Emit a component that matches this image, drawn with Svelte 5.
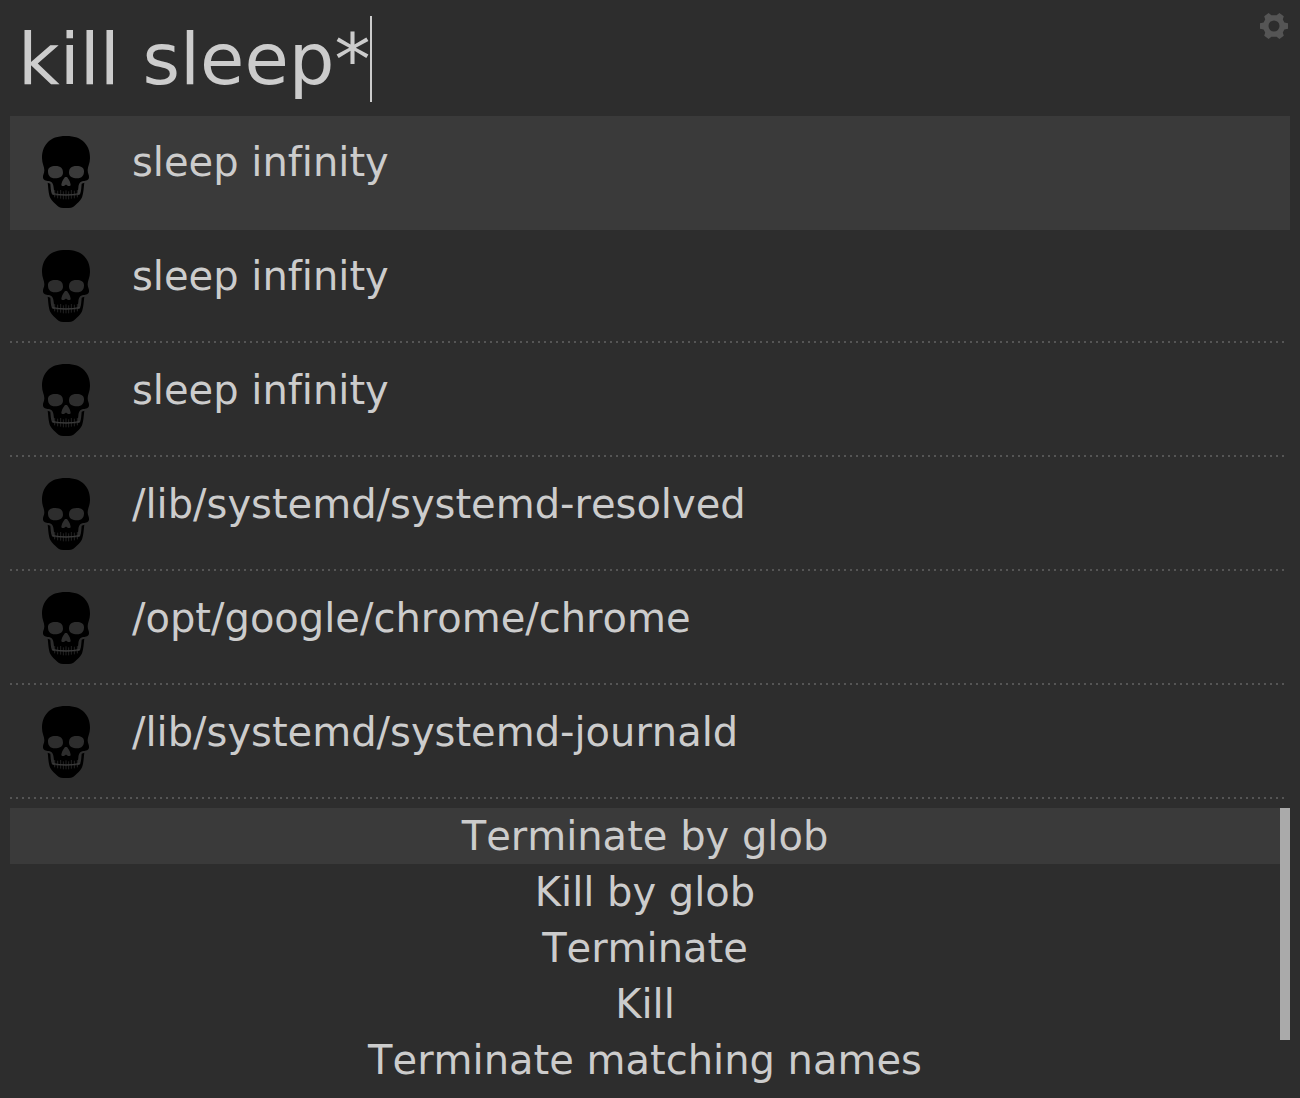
<script>
  let query = $state('kill sleep*');
  let selected = $state(0);
  let action = $state(0);
  const results = [
    'sleep infinity',
    'sleep infinity',
    'sleep infinity',
    '/lib/systemd/systemd-resolved',
    '/opt/google/chrome/chrome',
    '/lib/systemd/systemd-journald'
  ];
  const actions = ['Terminate by glob', 'Kill by glob', 'Terminate', 'Kill', 'Terminate matching names'];
</script>

{#snippet skull()}
  <svg class="skull" viewBox="0 0 144 216" aria-hidden="true">
    <path fill-rule="evenodd" d="M72 0C98 0 115 6 128 20C140 33 144 49 144 66C144 82 137 92 137 103C137 113 142 117 141 125C140 132 132 134 124 135C114 136 110 144 109 155L106 177C84 181 60 181 38 177L35 155C34 144 30 136 20 135C12 134 4 132 3 125C2 117 7 113 7 103C7 92 0 82 0 66C0 49 4 33 16 20C29 6 46 0 72 0ZM40 90C27 90 18 94 18 106C18 119 24 127 39 127C52 127 63 121 63 110C63 97 57 90 40 90ZM104 90C87 90 81 97 81 110C81 121 92 127 105 127C120 127 126 119 126 106C126 94 117 90 104 90ZM69 123C62 131 58 142 58 147C59 152 67 151 71 146H73C77 151 85 152 86 147C86 142 82 131 75 123Z" />
    <path d="M17 140L25 143C26 153 26 165 30 175C39 181 105 181 114 175C118 165 118 153 119 143L127 140C125 153 125 174 119 186C114 195 105 203 98 209C92 215 84 216 72 216C60 216 52 215 46 209C39 203 30 195 25 186C19 174 19 153 17 140Z" />
    <path class="teeth" d="M38 162V184M47 164V187M56 162V188M64 166V190M72 163V190M80 166V190M88 162V188M97 164V187M106 162V184" />
    <path class="bite" d="M31 173Q72 181 113 173" />
  </svg>
{/snippet}

<main>
  <header>
    <input type="text" aria-label="Query" spellcheck="false" bind:value={query} />
    <span class="caret"></span>
    <button class="settings" aria-label="Settings">
      <svg viewBox="0 0 28 28" aria-hidden="true">
        <path fill-rule="evenodd" d="M0 11.3L3.6 10.6L5.2 7.6L4.2 4.2L8.6 1L11.4 3.2H16.6L19.4 1L23.8 4.2L22.8 7.6L24.4 10.6L28 11.3V16.7L24.4 17.4L22.8 20.4L23.8 23.8L19.4 27L16.6 24.8H11.4L8.6 27L4.2 23.8L5.2 20.4L3.6 17.4L0 16.7ZM14 8.5A5.5 5.5 0 1 0 14 19.5A5.5 5.5 0 1 0 14 8.5Z" />
      </svg>
    </button>
  </header>

  <ul class="results">
    {#each results as text, i}
      <li>
        <button class="result" class:selected={i === selected} onclick={() => (selected = i)}>
          {@render skull()}
          <span>{text}</span>
        </button>
      </li>
    {/each}
  </ul>

  <section class="actions">
    <ul>
      {#each actions as text, i}
        <li>
          <button class="action" class:selected={i === action} onclick={() => (action = i)}>{text}</button>
        </li>
      {/each}
    </ul>
    <div class="track"><div class="thumb"></div></div>
  </section>
</main>

<style>
  :global(body) {
    margin: 0;
    background: #2d2d2d;
  }
  main {
    box-sizing: border-box;
    min-height: 100vh;
    padding: 10px;
    background: #2d2d2d;
    color: #ccc;
    font: 40px/48px 'DejaVu Sans', sans-serif;
  }
  button,
  input {
    margin: 0;
    padding: 0;
    border: 0;
    background: none;
    color: inherit;
    font: inherit;
    font-kerning: none;
    font-variant-ligatures: none;
    outline: none;
  }
  header {
    display: flex;
    align-items: flex-start;
    padding: 0 0 14px 8px;
  }
  input {
    field-sizing: content;
    min-width: 8px;
    margin-top: 6px;
    height: 86px;
    font-size: 72px;
    line-height: 86px;
    caret-color: transparent;
  }
  .caret {
    width: 2px;
    height: 86px;
    margin-top: 6px;
    background: #ccc;
  }
  .settings {
    display: flex;
    margin: 2px 2px 0 auto;
  }
  .settings svg {
    width: 28px;
    height: 28px;
    fill: #555;
  }
  ul {
    margin: 0;
    padding: 0;
    list-style: none;
  }
  .result {
    display: flex;
    align-items: flex-start;
    width: 100%;
    height: 114px;
    padding: 20px 0 0 32px;
    gap: 42px;
    text-align: left;
    box-sizing: border-box;
    background: repeating-linear-gradient(90deg, #555 0 2px, transparent 2px 6px) 0 111px / calc(100% - 4px) 2px no-repeat;
  }
  .result span {
    margin-top: 2px;
  }
  .selected,
  .result.selected {
    background: #3a3a3a;
  }
  .skull {
    flex: none;
    width: 48px;
    height: 72px;
  }
  .bite,
  .teeth {
    fill: none;
    stroke: #3a3a3a;
    stroke-width: 4;
  }
  .teeth {
    stroke: #333;
    stroke-width: 2;
  }
  .actions {
    display: flex;
    margin-top: 8px;
  }
  .actions ul {
    flex: 1;
  }
  .action {
    display: block;
    width: 100%;
    height: 56px;
    text-align: center;
  }
  .track {
    width: 10px;
  }
  .thumb {
    height: 232px;
    background: #aaa;
  }
</style>
